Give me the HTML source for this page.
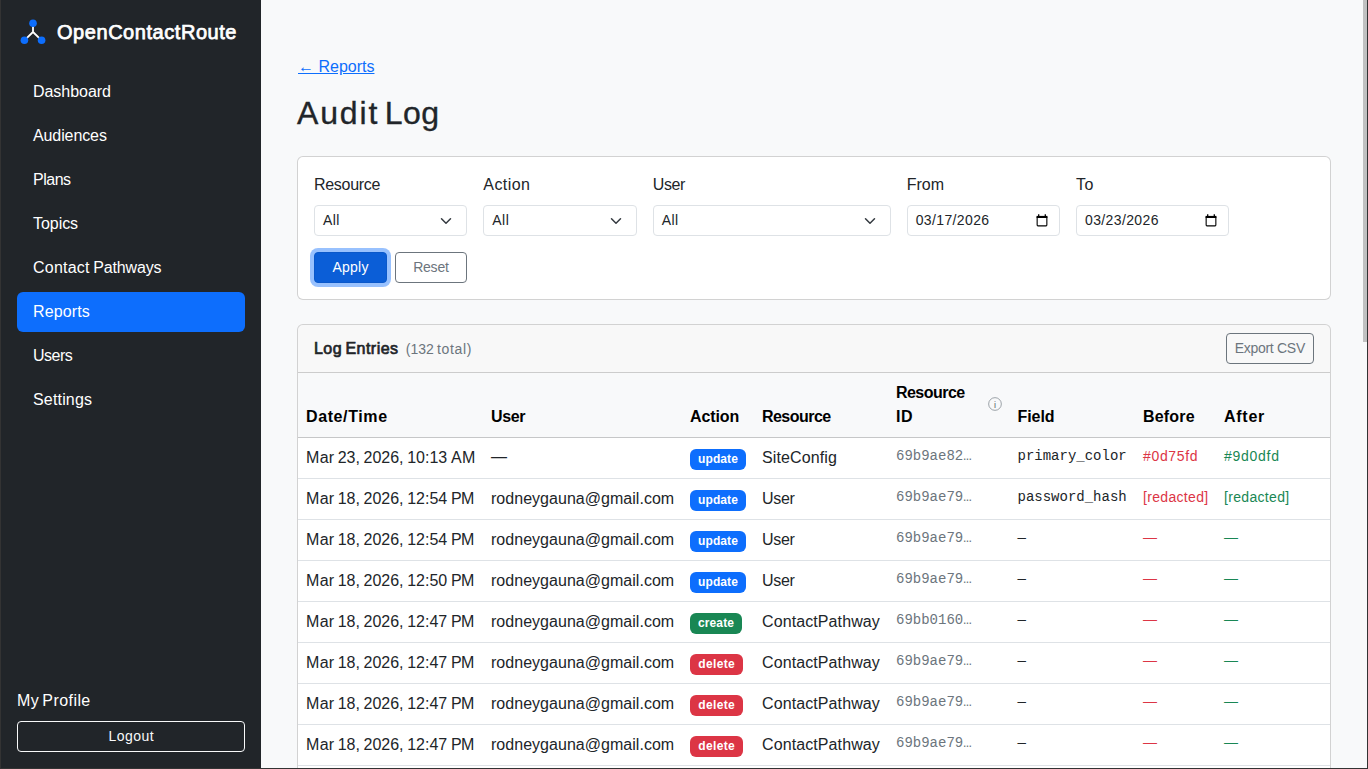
<!DOCTYPE html>
<html lang="en"><head>
<meta charset="utf-8">
<title>Audit Log - OpenContactRoute</title>
<style>
*{box-sizing:border-box}
html,body{margin:0;padding:0}
body{width:1368px;height:769px;overflow:hidden;background:#333333;position:relative;font-family:"Liberation Sans", sans-serif;font-size:16px;line-height:24px;color:#212529;-webkit-text-size-adjust:100%}
a{color:inherit;text-decoration:none}
#win{position:absolute;left:1px;top:0;width:1366px;height:768px;overflow:hidden;background:#f8f9fa}

/* ---------- sidebar ---------- */
#side{position:absolute;left:0;top:0;width:260px;height:768px;background:#212529;color:#fff}
#logo{position:absolute;left:15px;top:14px;width:40px;height:36px;display:block}
.brand{position:absolute;left:56px;top:17px;height:30px;line-height:30px;font-size:20px;font-weight:600;color:#fff;white-space:nowrap}
.nav{position:absolute;left:16px;top:72px;width:228px;margin:0;padding:0;list-style:none}
.nav li{margin:0 0 4px;padding:0}
.nav a{display:block;height:40px;padding:8px 16px;line-height:24px;border-radius:6px;color:#fff;white-space:nowrap}
.nav a.active{background:#0d6efd;color:#fff}
.profile{position:absolute;left:16px;top:689px;height:24px;line-height:24px;color:#fff;white-space:nowrap}
.logout{position:absolute;left:16px;top:721px;width:228px;height:31px;border:1px solid #f8f9fa;border-radius:4px;color:#f8f9fa;font-size:14px;line-height:21px;padding:4px 8px;text-align:center;white-space:nowrap}

/* ---------- main ---------- */
#main{position:absolute;left:296px;top:0;width:1034px;height:768px}
.back{position:absolute;left:1px;top:55px;height:24px;line-height:24px;white-space:nowrap}
.back a{color:#0d6efd;text-decoration:underline}
h1{position:absolute;left:0;top:94px;margin:0;font-size:32px;line-height:38px;height:38px;font-weight:500;white-space:nowrap;color:#212529}
.card{position:absolute;left:0;width:1034px;background:#fff;border:1px solid rgba(0,0,0,.175);border-radius:6px}
#filters{top:156px;height:144px}
.field{position:absolute;top:16px;height:63px}
.field label{display:block;height:24px;line-height:24px;margin:0 0 8px;white-space:nowrap}
.ctl{position:relative;display:block;width:100%;height:31px;border:1px solid #dee2e6;border-radius:4px;background:#fff;font-size:14px;line-height:21px;padding:4px 8px;white-space:nowrap;color:#212529}
.ctl svg{position:absolute;display:block}
.ctl .chev{right:12px;top:8.5px;width:16px;height:12px}
.ctl .cal{right:10px;top:7px;width:14px;height:15px}
.ctl.date{padding-left:8px}
.btn{position:absolute;top:95px;height:31px;border-radius:4px;font-size:14px;line-height:21px;padding:4px 0;text-align:center;white-space:nowrap;border:1px solid transparent}
.btn-apply{left:16px;width:73px;background:#0b5ed7;border-color:#0a58ca;color:#fff;box-shadow:0 0 0 4px rgba(49,132,253,.5)}
.btn-reset{left:97px;width:72px;border-color:#6c757d;color:#6c757d;background:transparent}

#log{top:324px;height:520px;overflow:hidden}
.card-h{position:relative;height:48px;border-bottom:1px solid rgba(0,0,0,.175);background:rgba(33,37,41,.03);border-radius:5px 5px 0 0}
.card-h .ttl{position:absolute;left:16px;top:12px;height:24px;line-height:24px;white-space:nowrap}
.card-h .ttl b{font-weight:600}
.card-h .ttl small{font-size:14px;color:#6c757d;margin-left:4px}
.btn-export{top:8px;right:16px;width:88px;border-color:#6c757d;color:#6c757d;background:transparent}

table{border-collapse:separate;border-spacing:0;table-layout:fixed;width:1032px;margin:0}
th,td{padding:8px;text-align:left;white-space:nowrap;overflow:hidden}
thead th{height:65px;vertical-align:bottom;background:#f8f9fa;color:#000;font-weight:700;border-bottom:1px solid #c6c7c8;line-height:24px;position:relative}
tbody td{height:41px;vertical-align:top;border-bottom:1px solid #dee2e6;background:#fff;color:#212529;line-height:24px}
tbody td.muted{color:#6c757d}tbody td.red{color:#dc3545}tbody td.green{color:#198754}
.info{position:absolute;left:98.9px;top:23px;width:16px;height:16px;display:block}
.badge{display:inline-block;vertical-align:top;margin-top:3px;height:21px;line-height:21px;padding:0;border-radius:6px;color:#fff;font-size:12px;font-weight:700;text-align:center}
.b-update{background:#0d6efd;width:56px}
.b-create{background:#198754;width:52px}
.b-delete{background:#dc3545;width:53px}
td.c-rid,td.c-field{font-family:"Liberation Mono", monospace;font-size:14px;line-height:21px}
td.c-before,td.c-after{font-size:14px;line-height:21px}
.muted{color:#6c757d}
.red{color:#dc3545}
.green{color:#198754}

/* ---------- scrollbar ---------- */
#sb-thumb{position:absolute;left:1362px;top:0;width:4px;height:342px;background:#c1c1c1}

.dash{position:relative;top:-1px}
h1{-webkit-text-stroke:0.35px #212529}


.brand{font-weight:400;-webkit-text-stroke:0.75px #fff}
.card-h .ttl b{font-weight:400;-webkit-text-stroke:0.7px #212529}

</style>
</head>
<body>
<div id="win">
  <aside id="side">
    <svg id="logo" viewBox="0 0 40 36" aria-hidden="true">
      <path d="M17 9.2V18M17 18L8.4 26.3M17 18L25.6 26.3" stroke="#ffffff" stroke-width="1.8" stroke-linecap="round" fill="none"></path>
      <circle cx="17" cy="9.2" r="3.8" fill="#0d6efd"></circle>
      <circle cx="8.4" cy="26.3" r="3.8" fill="#0d6efd"></circle>
      <circle cx="25.6" cy="26.3" r="3.8" fill="#0d6efd"></circle>
    </svg>
    <a class="brand" href="#"><span style="letter-spacing: 0.55px;">OpenContactRoute</span></a>
    <ul class="nav">
      <li><a href="#"><span style="letter-spacing: -0.04px;">Dashboard</span></a></li>
      <li><a href="#"><span style="letter-spacing: -0.1px;">Audiences</span></a></li>
      <li><a href="#"><span style="letter-spacing: -0.48px;">Plans</span></a></li>
      <li><a href="#"><span style="letter-spacing: -0.05px;">Topics</span></a></li>
      <li><a href="#"><span style="letter-spacing: 0.23px;">Contact</span> <span style="letter-spacing: -0.15px; position: relative; left: -1.06px;">Pathways</span></a></li>
      <li><a href="#" class="active"><span style="letter-spacing: 0.13px;">Reports</span></a></li>
      <li><a href="#"><span style="letter-spacing: -0.52px;">Users</span></a></li>
      <li><a href="#"><span style="letter-spacing: 0.17px;">Settings</span></a></li>
    </ul>
    <a class="profile" href="#"><span style="letter-spacing: 0.3px;">My</span> <span style="letter-spacing: 0.44px; position: relative; left: -1.12px;">Profile</span></a>
    <a class="logout" href="#"><span style="letter-spacing: 0.45px; position: relative; left: 0.22px;">Logout</span></a>
  </aside>

  <main id="main">
    <div class="back"><a href="#">← Reports</a></div>
    <h1><span style="letter-spacing: 1.84px;">Audit</span> <span style="letter-spacing: 0.52px; position: relative; left: -3.3px;">Log</span></h1>

    <section class="card" id="filters">
      <div class="field" style="left:16px;width:153.33px"><label><span style="letter-spacing: -0.29px;">Resource</span></label>
        <div class="ctl"><span><span style="letter-spacing: 0.44px;">All</span></span><svg class="chev" viewBox="0 0 16 12"><path d="M3.5 3.75 8 8.25l4.5-4.5" fill="none" stroke="#343a40" stroke-width="1.5" stroke-linecap="round" stroke-linejoin="round"></path></svg></div></div>
      <div class="field" style="left:185.33px;width:153.33px"><label><span style="letter-spacing: 0.41px;">Action</span></label>
        <div class="ctl"><span><span style="letter-spacing: 0.44px;">All</span></span><svg class="chev" viewBox="0 0 16 12"><path d="M3.5 3.75 8 8.25l4.5-4.5" fill="none" stroke="#343a40" stroke-width="1.5" stroke-linecap="round" stroke-linejoin="round"></path></svg></div></div>
      <div class="field" style="left:354.67px;width:238px"><label><span style="letter-spacing: -0.33px;">User</span></label>
        <div class="ctl"><span><span style="letter-spacing: 0.44px;">All</span></span><svg class="chev" viewBox="0 0 16 12"><path d="M3.5 3.75 8 8.25l4.5-4.5" fill="none" stroke="#343a40" stroke-width="1.5" stroke-linecap="round" stroke-linejoin="round"></path></svg></div></div>
      <div class="field" style="left:608.67px;width:153.33px"><label><span style="letter-spacing: 0.02px;">From</span></label>
        <div class="ctl date"><span><span style="letter-spacing: 0.38px;">03/17/2026</span></span><svg class="cal" viewBox="0 0 14 15"><path d="M3.7 1.3v2M10.3 1.3v2" stroke="#000" stroke-width="1.3" fill="none"></path><rect x="2.15" y="3.45" width="9.7" height="9.4" rx="0.8" fill="none" stroke="#000" stroke-width="1.1"></rect><rect x="1.6" y="2.9" width="10.8" height="2.1" fill="#000"></rect></svg></div></div>
      <div class="field" style="left:778px;width:153.33px"><label><span style="letter-spacing: 0.59px;">To</span></label>
        <div class="ctl date"><span><span style="letter-spacing: 0.38px;">03/23/2026</span></span><svg class="cal" viewBox="0 0 14 15"><path d="M3.7 1.3v2M10.3 1.3v2" stroke="#000" stroke-width="1.3" fill="none"></path><rect x="2.15" y="3.45" width="9.7" height="9.4" rx="0.8" fill="none" stroke="#000" stroke-width="1.1"></rect><rect x="1.6" y="2.9" width="10.8" height="2.1" fill="#000"></rect></svg></div></div>
      <a class="btn btn-apply" href="#"><span style="letter-spacing: 0.21px; position: relative; left: 0.11px;">Apply</span></a>
      <a class="btn btn-reset" href="#"><span style="letter-spacing: -0.21px; position: relative; left: -0.11px;">Reset</span></a>
    </section>

    <section class="card" id="log">
      <div class="card-h">
        <div class="ttl"><b><span style="letter-spacing: 0.45px;">Log</span> <span style="letter-spacing: 0.46px; position: relative; left: -1.04px;">Entries</span></b> <small><span style="letter-spacing: 0.03px; position: relative; left: -2.28px;">(132</span> <span style="letter-spacing: 0.65px; position: relative; left: -3px;">total)</span></small></div>
        <a class="btn btn-export" href="#"><span style="letter-spacing: -0.3px; position: relative; left: -0.14px;">Export CSV</span></a>
      </div>
      <table>
        <colgroup><col style="width:185px"><col style="width:199px"><col style="width:72px"><col style="width:134px"><col style="width:121.5px"><col style="width:125.5px"><col style="width:81px"><col style="width:114px"></colgroup>
        <thead>
          <tr>
            <th><span><span style="letter-spacing: 0.61px;">Date/Time</span></span></th><th><span><span style="letter-spacing: -0.34px;">User</span></span></th><th><span><span style="letter-spacing: -0.09px;">Action</span></span></th><th><span><span style="letter-spacing: -0.54px;">Resource</span></span></th>
            <th><span><span style="letter-spacing: -0.54px;">Resource</span><br><span style="letter-spacing: 0.48px;">ID</span></span><svg class="info" viewBox="0 0 16 16"><circle cx="8" cy="8" r="6.35" fill="none" stroke="#6c757d" stroke-width="0.65"></circle><text x="8" y="11.5" text-anchor="middle" font-size="9" font-weight="400" fill="#565e64">i</text></svg></th>
            <th><span><span style="letter-spacing: -0.06px;">Field</span></span></th><th><span><span style="letter-spacing: 0.19px;">Before</span></span></th><th><span><span style="letter-spacing: 0.73px;">After</span></span></th>
          </tr>
        </thead>
        <tbody>
<tr><td class="c-date"><span><span style="letter-spacing: 0.32px;">Mar</span> <span style="letter-spacing: -0.12px; position: relative; left: -1.13px;">23,</span> <span style="position: relative; left: -1.81px;">2026,</span> <span style="position: relative; left: -2.62px;">10:13</span> <span style="letter-spacing: 0.3px; position: relative; left: -3.42px;">AM</span></span></td><td class="c-user"><span class="dash">—</span></td><td class="c-act"><span class="badge b-update"><span style="letter-spacing: 0.09px;">update</span></span></td><td class="c-res"><span><span style="letter-spacing: 0.11px;">SiteConfig</span></span></td><td class="c-rid muted"><span>69b9ae82…</span></td><td class="c-field"><span>primary_color</span></td><td class="c-before red"><span><span style="letter-spacing: 0.67px;">#0d75fd</span></span></td><td class="c-after green"><span><span style="letter-spacing: 0.72px;">#9d0dfd</span></span></td></tr>
<tr><td class="c-date"><span><span style="letter-spacing: 0.32px;">Mar</span> <span style="letter-spacing: -0.12px; position: relative; left: -1.13px;">18,</span> <span style="position: relative; left: -1.81px;">2026,</span> <span style="position: relative; left: -2.62px;">12:54</span> <span style="letter-spacing: -0.52px; position: relative; left: -3.42px;">PM</span></span></td><td class="c-user"><span><span style="letter-spacing: 0.03px;">rodneygauna@gmail.com</span></span></td><td class="c-act"><span class="badge b-update"><span style="letter-spacing: 0.09px;">update</span></span></td><td class="c-res"><span><span style="letter-spacing: -0.33px;">User</span></span></td><td class="c-rid muted"><span>69b9ae79…</span></td><td class="c-field"><span>password_hash</span></td><td class="c-before red"><span><span style="letter-spacing: 0.32px;">[redacted]</span></span></td><td class="c-after green"><span><span style="letter-spacing: 0.32px;">[redacted]</span></span></td></tr>
<tr><td class="c-date"><span><span style="letter-spacing: 0.32px;">Mar</span> <span style="letter-spacing: -0.12px; position: relative; left: -1.13px;">18,</span> <span style="position: relative; left: -1.81px;">2026,</span> <span style="position: relative; left: -2.62px;">12:54</span> <span style="letter-spacing: -0.52px; position: relative; left: -3.42px;">PM</span></span></td><td class="c-user"><span><span style="letter-spacing: 0.03px;">rodneygauna@gmail.com</span></span></td><td class="c-act"><span class="badge b-update"><span style="letter-spacing: 0.09px;">update</span></span></td><td class="c-res"><span><span style="letter-spacing: -0.33px;">User</span></span></td><td class="c-rid muted"><span>69b9ae79…</span></td><td class="c-field"><span>—</span></td><td class="c-before red"><span class="dash">—</span></td><td class="c-after green"><span class="dash">—</span></td></tr>
<tr><td class="c-date"><span><span style="letter-spacing: 0.32px;">Mar</span> <span style="letter-spacing: -0.12px; position: relative; left: -1.13px;">18,</span> <span style="position: relative; left: -1.81px;">2026,</span> <span style="position: relative; left: -2.62px;">12:50</span> <span style="letter-spacing: -0.52px; position: relative; left: -3.42px;">PM</span></span></td><td class="c-user"><span><span style="letter-spacing: 0.03px;">rodneygauna@gmail.com</span></span></td><td class="c-act"><span class="badge b-update"><span style="letter-spacing: 0.09px;">update</span></span></td><td class="c-res"><span><span style="letter-spacing: -0.33px;">User</span></span></td><td class="c-rid muted"><span>69b9ae79…</span></td><td class="c-field"><span>—</span></td><td class="c-before red"><span class="dash">—</span></td><td class="c-after green"><span class="dash">—</span></td></tr>
<tr><td class="c-date"><span><span style="letter-spacing: 0.32px;">Mar</span> <span style="letter-spacing: -0.12px; position: relative; left: -1.13px;">18,</span> <span style="position: relative; left: -1.81px;">2026,</span> <span style="position: relative; left: -2.62px;">12:47</span> <span style="letter-spacing: -0.52px; position: relative; left: -3.42px;">PM</span></span></td><td class="c-user"><span><span style="letter-spacing: 0.03px;">rodneygauna@gmail.com</span></span></td><td class="c-act"><span class="badge b-create"><span style="letter-spacing: 0.14px;">create</span></span></td><td class="c-res"><span><span style="letter-spacing: 0.1px;">ContactPathway</span></span></td><td class="c-rid muted"><span>69bb0160…</span></td><td class="c-field"><span>—</span></td><td class="c-before red"><span class="dash">—</span></td><td class="c-after green"><span class="dash">—</span></td></tr>
<tr><td class="c-date"><span><span style="letter-spacing: 0.32px;">Mar</span> <span style="letter-spacing: -0.12px; position: relative; left: -1.13px;">18,</span> <span style="position: relative; left: -1.81px;">2026,</span> <span style="position: relative; left: -2.62px;">12:47</span> <span style="letter-spacing: -0.52px; position: relative; left: -3.42px;">PM</span></span></td><td class="c-user"><span><span style="letter-spacing: 0.03px;">rodneygauna@gmail.com</span></span></td><td class="c-act"><span class="badge b-delete"><span style="letter-spacing: 0.37px; position: relative; left: 0.18px;">delete</span></span></td><td class="c-res"><span><span style="letter-spacing: 0.1px;">ContactPathway</span></span></td><td class="c-rid muted"><span>69b9ae79…</span></td><td class="c-field"><span>—</span></td><td class="c-before red"><span class="dash">—</span></td><td class="c-after green"><span class="dash">—</span></td></tr>
<tr><td class="c-date"><span><span style="letter-spacing: 0.32px;">Mar</span> <span style="letter-spacing: -0.12px; position: relative; left: -1.13px;">18,</span> <span style="position: relative; left: -1.81px;">2026,</span> <span style="position: relative; left: -2.62px;">12:47</span> <span style="letter-spacing: -0.52px; position: relative; left: -3.42px;">PM</span></span></td><td class="c-user"><span><span style="letter-spacing: 0.03px;">rodneygauna@gmail.com</span></span></td><td class="c-act"><span class="badge b-delete"><span style="letter-spacing: 0.37px; position: relative; left: 0.18px;">delete</span></span></td><td class="c-res"><span><span style="letter-spacing: 0.1px;">ContactPathway</span></span></td><td class="c-rid muted"><span>69b9ae79…</span></td><td class="c-field"><span>—</span></td><td class="c-before red"><span class="dash">—</span></td><td class="c-after green"><span class="dash">—</span></td></tr>
<tr><td class="c-date"><span><span style="letter-spacing: 0.32px;">Mar</span> <span style="letter-spacing: -0.12px; position: relative; left: -1.13px;">18,</span> <span style="position: relative; left: -1.81px;">2026,</span> <span style="position: relative; left: -2.62px;">12:47</span> <span style="letter-spacing: -0.52px; position: relative; left: -3.42px;">PM</span></span></td><td class="c-user"><span><span style="letter-spacing: 0.03px;">rodneygauna@gmail.com</span></span></td><td class="c-act"><span class="badge b-delete"><span style="letter-spacing: 0.37px; position: relative; left: 0.18px;">delete</span></span></td><td class="c-res"><span><span style="letter-spacing: 0.1px;">ContactPathway</span></span></td><td class="c-rid muted"><span>69b9ae79…</span></td><td class="c-field"><span>—</span></td><td class="c-before red"><span class="dash">—</span></td><td class="c-after green"><span class="dash">—</span></td></tr>
<tr><td class="c-date"><span><span style="letter-spacing: 0.32px;">Mar</span> <span style="letter-spacing: -0.12px; position: relative; left: -1.13px;">18,</span> <span style="position: relative; left: -1.81px;">2026,</span> <span style="position: relative; left: -2.62px;">12:47</span> <span style="letter-spacing: -0.52px; position: relative; left: -3.42px;">PM</span></span></td><td class="c-user"><span><span style="letter-spacing: 0.03px;">rodneygauna@gmail.com</span></span></td><td class="c-act"><span class="badge b-delete"><span style="letter-spacing: 0.37px; position: relative; left: 0.18px;">delete</span></span></td><td class="c-res"><span><span style="letter-spacing: 0.1px;">ContactPathway</span></span></td><td class="c-rid muted"><span>69b9ae79…</span></td><td class="c-field"><span>—</span></td><td class="c-before red"><span class="dash">—</span></td><td class="c-after green"><span class="dash">—</span></td></tr>
        </tbody>
      </table>
    </section>
  </main>
  <div id="sb-thumb"></div>
</div>



</body></html>
